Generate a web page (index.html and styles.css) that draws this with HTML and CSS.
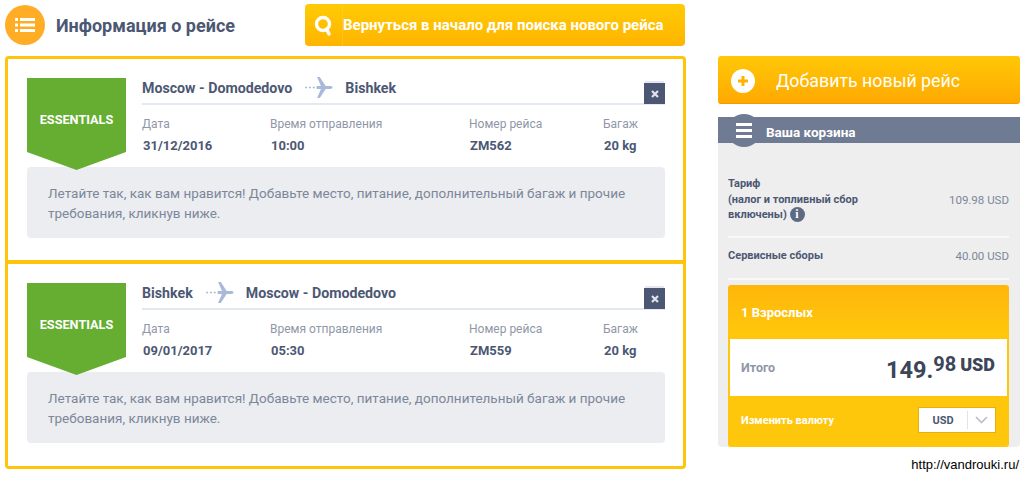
FILE: index.html
```html
<!DOCTYPE html>
<html lang="ru">
<head>
<meta charset="UTF-8" />
<title>Информация о рейсе</title>
<link rel="stylesheet" href="styles.css">
</head>
<body>
<div class="page">
    <!-- ==========  LEFT COLUMN  ========== -->
    <main class="left">
        <div class="top-bar">
            <span class="list-circle">
                <svg width="20" height="14" viewBox="0 0 20 14"><path fill="#fff" d="M0 0h3v3H0zM5 0h15v3H5zM0 5.500h3v3H0zM5 5.500h15v3H5zM0 11h3v3H0zM5 11h15v3H5z"/></svg>
            </span>
            <h1 class="page-title">Информация о рейсе</h1>
            <a class="back-btn">
                <span class="back-icon">
                    <svg width="20" height="21" viewBox="0 0 20 21"><circle cx="9" cy="9" r="6.500" fill="none" stroke="#fff" stroke-width="3.400"/><path d="M12.500 14l2.500 5" stroke="#fff" stroke-width="3.400" stroke-linecap="round"/></svg>
                </span>
                <span class="back-text">Вернуться в начало для поиска нового рейса</span>
            </a>
        </div>

        <div class="flights">
            <section class="flight">
                <div class="flight-main">
                    <div class="badge">ESSENTIALS</div>
                    <div class="flight-info">
                        <div class="route">
                            <span>Moscow - Domodedovo</span>
                            <svg class="plane" width="28" height="21" viewBox="0 0 29 22"><path fill="#a9b9d9" d="M0 10.300h2v1.400H0zM4 10.300h2v1.400H4zM8 10.300h2v1.400H8z"/><path fill="#a9b9d9" d="M12 9.500h4.500L12.500 0h2.800l6.200 9.500h4.500c1.500 0 2.800.7 2.800 1.500s-1.300 1.500-2.800 1.500h-4.500L15.300 22h-2.800l4-9.500H12z"/></svg>
                            <span>Bishkek</span>
                            <button class="close-btn">
                                <svg width="8" height="8" viewBox="0 0 8 8"><path d="M1 1l6 6M7 1L1 7" stroke="#dfe3ea" stroke-width="2.200"/></svg>
                            </button>
                        </div>
                        <div class="details">
                            <div class="label">Дата</div>
                            <div class="label">Время отправления</div>
                            <div class="label">Номер рейса</div>
                            <div class="label">Багаж</div>
                            <div class="value">31/12/2016</div>
                            <div class="value">10:00</div>
                            <div class="value">ZM562</div>
                            <div class="value">20 kg</div>
                        </div>
                    </div>
                </div>
                <p class="note">Летайте так, как вам нравится! Добавьте место, питание, дополнительный багаж и прочие требования, кликнув ниже.</p>
            </section>

            <section class="flight">
                <div class="flight-main">
                    <div class="badge">ESSENTIALS</div>
                    <div class="flight-info">
                        <div class="route">
                            <span>Bishkek</span>
                            <svg class="plane" width="28" height="21" viewBox="0 0 29 22"><path fill="#a9b9d9" d="M0 10.300h2v1.400H0zM4 10.300h2v1.400H4zM8 10.300h2v1.400H8z"/><path fill="#a9b9d9" d="M12 9.500h4.500L12.500 0h2.800l6.200 9.500h4.500c1.500 0 2.800.7 2.800 1.500s-1.300 1.500-2.800 1.500h-4.500L15.300 22h-2.800l4-9.500H12z"/></svg>
                            <span>Moscow - Domodedovo</span>
                            <button class="close-btn">
                                <svg width="8" height="8" viewBox="0 0 8 8"><path d="M1 1l6 6M7 1L1 7" stroke="#dfe3ea" stroke-width="2.200"/></svg>
                            </button>
                        </div>
                        <div class="details">
                            <div class="label">Дата</div>
                            <div class="label">Время отправления</div>
                            <div class="label">Номер рейса</div>
                            <div class="label">Багаж</div>
                            <div class="value">09/01/2017</div>
                            <div class="value">05:30</div>
                            <div class="value">ZM559</div>
                            <div class="value">20 kg</div>
                        </div>
                    </div>
                </div>
                <p class="note">Летайте так, как вам нравится! Добавьте место, питание, дополнительный багаж и прочие требования, кликнув ниже.</p>
            </section>
        </div>
    </main>

    <!-- ==========  RIGHT COLUMN  ========== -->
    <aside class="right">
        <a class="add-btn">
            <svg width="24" height="24" viewBox="0 0 24 24"><circle cx="12" cy="12" r="12" fill="#fff"/><path d="M12 7v10M7 12h10" stroke="#ffb300" stroke-width="3"/></svg>
            <span>Добавить новый рейс</span>
        </a>

        <div class="cart">
            <div class="cart-head">
                <span class="cart-notch">
                    <svg width="16" height="15" viewBox="0 0 16 15"><path fill="#fff" d="M0 0h16v3H0zM0 6h16v3H0zM0 12h16v3H0z"/></svg>
                </span>
                <span>Ваша корзина</span>
            </div>
            <div class="cart-body">
                <div class="cart-row fare">
                    <div class="cart-label">Тариф<br>(налог и топливный сбор<br>включены) <span class="info">i</span></div>
                    <div class="cart-sum">109.98 USD</div>
                </div>
                <div class="cart-row fees">
                    <div class="cart-label">Сервисные сборы</div>
                    <div class="cart-sum">40.00 USD</div>
                </div>
                <div class="total-box">
                    <div class="total-head">1 Взрослых</div>
                    <div class="total-line">
                        <span class="total-label">Итого</span>
                        <span class="total-sum">149.<sup>98</sup> <b>USD</b></span>
                    </div>
                    <div class="currency">
                        <span>Изменить валюту</span>
                        <div class="currency-select">
                            <span class="currency-code">USD</span>
                            <span class="currency-arrow">
                                <svg width="13" height="8" viewBox="0 0 13 8"><path d="M1 1l5.500 5.500L12 1" fill="none" stroke="#b9bec8" stroke-width="1.600"/></svg>
                            </span>
                        </div>
                    </div>
                </div>
            </div>
        </div>

        <div class="credit">http://vandrouki.ru/</div>
    </aside>
</div>
</body>
</html>
```

FILE: styles.css
```css
/* ========  RESET & THEME  ======== */
*, *::before, *::after { box-sizing: border-box; margin: 0; padding: 0; }
:root {
    --yellow: #ffc40c;
    --orange: #ffb300;
    --slate: #4c5873;
    --grey-text: #8f97a8;
}
html, body { height: 477px; overflow: hidden; }
body {
    font-family: Roboto, "Noto Sans", sans-serif;
    background: #fff;
    color: var(--slate);
}
.page {
    display: flex;
    width: 1024px;
    padding: 4px 4px 0 5px;
}

/* ========  LEFT COLUMN  ======== */
.left { width: 681px; margin-right: 32px; }
.top-bar {
    display: flex;
    align-items: center;
    height: 42px;
}
.list-circle {
    width: 40px;
    height: 40px;
    border-radius: 50%;
    background: #ffad25;
    display: flex;
    align-items: center;
    justify-content: center;
}
.page-title {
    margin-left: 11px;
    width: 249px;
    font-size: 18px;
    font-weight: 700;
    white-space: nowrap;
}
.back-btn {
    display: flex;
    align-items: center;
    width: 380px;
    height: 42px;
    border-radius: 4px;
    background: linear-gradient(#ffcb05, #ffb400);
    color: #fff;
    font-size: 15px;
    font-weight: 700;
}
.back-icon {
    width: 38px;
    height: 100%;
    display: flex;
    align-items: center;
    justify-content: center;
    border-right: 1px solid rgba(255,255,255,.12);
}
.back-text { white-space: nowrap; }

/* Flights */
.flights { margin-top: 10px; }
.flight {
    border: 3px solid var(--yellow);
    height: 207px;
    padding: 19px 18px 0 19px;
    margin-bottom: -2px;
}
.flight:first-child { border-radius: 4px 4px 0 0; }
.flight:last-child { border-radius: 0 0 4px 4px; height: 208px; }
.flight-main { display: flex; height: 89px; }
.badge {
    position: relative;
    z-index: 1;
    width: 99px;
    height: 92px;
    padding-top: 34px;
    background: #65ae31;
    clip-path: polygon(0 0, 100% 0, 100% 74px, 50% 100%, 0 74px);
    color: #fff;
    font-size: 12.700px;
    font-weight: 700;
    text-align: center;
}
.flight-info { margin-left: 16px; flex: 1; }
.route {
    display: flex;
    align-items: center;
    height: 27px;
    padding-bottom: 6px;
    border-bottom: 2px solid #e3e8f2;
    font-size: 14.200px;
    font-weight: 700;
    position: relative;
}
.plane { margin: 0 12px 0 13px; }
.close-btn {
    position: absolute;
    right: 0;
    top: 5px;
    width: 21px;
    height: 21px;
    border: none;
    background: var(--slate);
    box-shadow: 0 -3px 0 -1px #e3e8f2;
    display: flex;
    align-items: center;
    justify-content: center;
}
.details {
    display: grid;
    grid-template-columns: 128px 199px 134px auto;
    margin-top: 11px;
}
.label {
    color: var(--grey-text);
    font-size: 12px;
    line-height: 16px;
}
.value {
    margin-top: 6px;
    padding-left: 1px;
    font-size: 13px;
    font-weight: 700;
    line-height: 16px;
}
.note {
    height: 71px;
    padding: 16px 21px;
    border-radius: 4px;
    background: #ebedf0;
    color: #7d879a;
    font-size: 13.500px;
    line-height: 20px;
}

/* ========  RIGHT COLUMN  ======== */
.right { width: 302px; position: relative; margin-top: 52px; }
.add-btn {
    display: flex;
    align-items: center;
    height: 48px;
    padding: 2px 0 0 13px;
    border-radius: 3px;
    background: linear-gradient(#ffc807, #ffa901);
    border-bottom: 1px solid #f09c00;
    color: #fff;
    font-size: 17.800px;
}
.add-btn span { margin-left: 21px; }
.cart { margin-top: 13px; height: 330px; background: #eeeeee; border-radius: 0 0 4px 4px; }
.cart-head {
    display: flex;
    align-items: center;
    height: 26px;
    padding-top: 3px;
    background: #6f7b92;
    color: #fff;
    font-size: 13.500px;
    font-weight: 700;
    position: relative;
}
.cart-head > span:last-child { margin-left: 48px; }
.cart-notch {
    position: absolute;
    left: 9px;
    top: -3px;
    width: 34px;
    height: 33px;
    border-radius: 50%;
    background: #6f7b92;
    display: flex;
    align-items: center;
    justify-content: center;
}
.cart-body { padding: 0 11px 0 10px; }
.cart-row {
    display: flex;
    justify-content: space-between;
    align-items: center;
    border-bottom: 2px solid #f8f8f8;
    font-size: 11px;
}
.fare { height: 95px; padding-top: 20px; }
.fees { height: 42px; padding-bottom: 4px; }
.cart-label { font-weight: 700; line-height: 15.500px; }
.cart-sum { color: #7d879a; font-size: 11.500px; }
.info {
    display: inline-block;
    width: 15px;
    height: 15px;
    border-radius: 50%;
    background: #5d6a84;
    color: #fff;
    font-family: "Liberation Serif", serif;
    font-size: 12px;
    line-height: 15px;
    text-align: center;
}
.total-box {
    margin-top: 5px;
    height: 162px;
    border-radius: 3px;
    background: linear-gradient(#ffb60a, #ffc70c 50px);
    padding: 0 2px;
}
.total-head {
    height: 54px;
    padding: 20px 0 0 11px;
    color: #fff;
    font-size: 13px;
    font-weight: 700;
}
.total-line {
    display: flex;
    justify-content: space-between;
    align-items: center;
    height: 57px;
    padding: 0 12px 0 11px;
    background: #fff;
}
.total-label { color: var(--grey-text); font-size: 12.500px; font-weight: 700; }
.total-sum { font-size: 23.500px; font-weight: 700; color: #3d4559; white-space: nowrap; padding-top: 4px; }
.total-sum sup { font-size: 20px; vertical-align: 7px; line-height: 0; }
.total-sum b { font-size: 18px; position: relative; top: -7px; margin-left: -2px; }
.currency {
    display: flex;
    justify-content: space-between;
    align-items: center;
    height: 48px;
    padding: 0 11px;
    color: #fff;
    font-size: 11px;
    font-weight: 700;
}
.currency-select {
    display: flex;
    align-items: center;
    width: 78px;
    height: 26px;
    background: #fff;
    border: 1px solid #e7ae12;
    color: var(--slate);
}
.currency-code { width: 48px; text-align: center; }
.currency-arrow {
    border-left: 1px solid #dfe3ea;
    height: 18px;
    flex: 1;
    display: flex;
    align-items: center;
    justify-content: center;
}
.credit {
    position: absolute;
    right: 1px;
    top: 401px;
    color: #000;
    font-family: "Liberation Sans", sans-serif;
    font-size: 13px;
}
```
